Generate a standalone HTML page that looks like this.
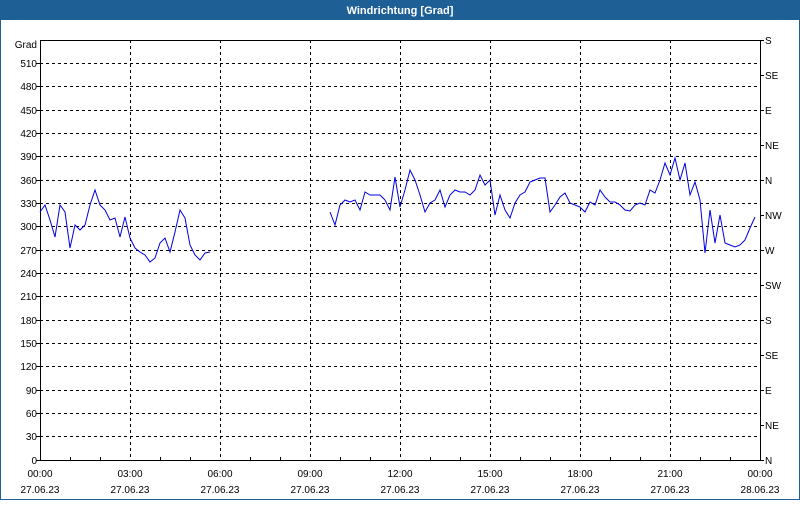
<!DOCTYPE html>
<html><head><meta charset="utf-8"><style>
html,body{margin:0;padding:0;}
body{width:800px;height:500px;overflow:hidden;background:#fff;font-family:"Liberation Sans",sans-serif;}
</style></head><body>
<svg width="800" height="500" xmlns="http://www.w3.org/2000/svg" font-family="Liberation Sans, sans-serif" font-size="10">
<rect x="0" y="0" width="800" height="500" fill="#fff"/>
<rect x="0" y="0" width="800" height="20" fill="#1e5f96"/>
<rect x="0.5" y="0" width="799" height="499.5" fill="none" stroke="#1e5f96" stroke-width="1"/>
<text x="400" y="14" fill="#fff" font-weight="bold" font-size="11" text-anchor="middle">Windrichtung [Grad]</text>
<g stroke="#000" stroke-width="1" stroke-dasharray="3,3" fill="none">
<path d="M40 63.5H760M40 86.5H760M40 110.5H760M40 133.5H760M40 156.5H760M40 180.5H760M40 203.5H760M40 226.5H760M40 250.5H760M40 273.5H760M40 296.5H760M40 320.5H760M40 343.5H760M40 366.5H760M40 390.5H760M40 413.5H760M40 436.5H760"/>
<path d="M130.5 40V460M220.5 40V460M310.5 40V460M400.5 40V460M490.5 40V460M580.5 40V460M670.5 40V460"/>
</g>
<rect x="40.5" y="40.5" width="720" height="420" fill="none" stroke="#000"/>
<g stroke="#000">
<path d="M760 40.5h4M760 75.5h4M760 110.5h4M760 145.5h4M760 180.5h4M760 215.5h4M760 250.5h4M760 285.5h4M760 320.5h4M760 355.5h4M760 390.5h4M760 425.5h4M760 460.5h4"/>
<path d="M70.5 460v-3M100.5 460v-3M160.5 460v-3M190.5 460v-3M250.5 460v-3M280.5 460v-3M340.5 460v-3M370.5 460v-3M430.5 460v-3M460.5 460v-3M520.5 460v-3M550.5 460v-3M610.5 460v-3M640.5 460v-3M700.5 460v-3M730.5 460v-3"/>
<path d="M36 63.5h4M36 86.5h4M36 110.5h4M36 133.5h4M36 156.5h4M36 180.5h4M36 203.5h4M36 226.5h4M36 250.5h4M36 273.5h4M36 296.5h4M36 320.5h4M36 343.5h4M36 366.5h4M36 390.5h4M36 413.5h4M36 436.5h4M36 460.5h4"/>
</g>
<g fill="#000" text-anchor="end">
<text x="37" y="48">Grad</text>
<text x="37" y="67">510</text><text x="37" y="90">480</text><text x="37" y="114">450</text><text x="37" y="137">420</text><text x="37" y="160">390</text><text x="37" y="184">360</text><text x="37" y="207">330</text><text x="37" y="230">300</text><text x="37" y="254">270</text><text x="37" y="277">240</text><text x="37" y="300">210</text><text x="37" y="324">180</text><text x="37" y="347">150</text><text x="37" y="370">120</text><text x="37" y="394">90</text><text x="37" y="417">60</text><text x="37" y="440">30</text><text x="37" y="464">0</text>
</g>
<g fill="#000">
<text x="765" y="44">S</text><text x="765" y="79">SE</text><text x="765" y="114">E</text><text x="765" y="149">NE</text><text x="765" y="184">N</text><text x="765" y="219">NW</text><text x="765" y="254">W</text><text x="765" y="289">SW</text><text x="765" y="324">S</text><text x="765" y="359">SE</text><text x="765" y="394">E</text><text x="765" y="429">NE</text><text x="765" y="464">N</text>
</g>
<g fill="#000" text-anchor="middle">
<text x="40" y="477">00:00</text><text x="130" y="477">03:00</text><text x="220" y="477">06:00</text><text x="310" y="477">09:00</text><text x="400" y="477">12:00</text><text x="490" y="477">15:00</text><text x="580" y="477">18:00</text><text x="670" y="477">21:00</text><text x="760" y="477">00:00</text>
<text x="40" y="493">27.06.23</text><text x="130" y="493">27.06.23</text><text x="220" y="493">27.06.23</text><text x="310" y="493">27.06.23</text><text x="400" y="493">27.06.23</text><text x="490" y="493">27.06.23</text><text x="580" y="493">27.06.23</text><text x="670" y="493">27.06.23</text><text x="760" y="493">28.06.23</text>
</g>
<g fill="none" stroke="#0000e0" stroke-width="1">
<polyline points="40,212 45,205 50,220 55,237 60,205 65,212 70,248 75,225 80,230 85,225 90,205 95,190 100,205 105,210 110,220 115,218 120,237 125,217 130,238 135,248 140,252 145,255 150,262 155,258 160,243 165,238 170,252 175,232 180,210 185,218 190,245 195,255 200,260 205,253 210,252"/>
<polyline points="330,212 335,225 340,205 345,200 350,202 355,200 360,210 365,192 370,195 375,195 380,195 385,200 390,210 395,177 400,207 405,190 410,170 415,180 420,195 425,212 430,203 435,200 440,190 445,207 450,195 455,190 460,192 465,192 470,195 475,190 480,175 485,185 490,180 495,215 500,195 505,210 510,218 515,203 520,195 525,192 530,182 535,180 540,178 545,178 550,212 555,205 560,197 565,193 570,203 575,205 580,207 585,212 590,202 595,205 600,190 605,197 610,202 615,202 620,205 625,210 630,211 635,205 640,203 645,205 650,190 655,193 660,180 665,163 670,175 675,158 680,180 685,163 690,195 695,182 700,200 705,253 710,210 715,243 720,215 725,243 730,245 735,247 740,245 745,240 750,228 755,217"/>
</g>
</svg>
</body></html>
